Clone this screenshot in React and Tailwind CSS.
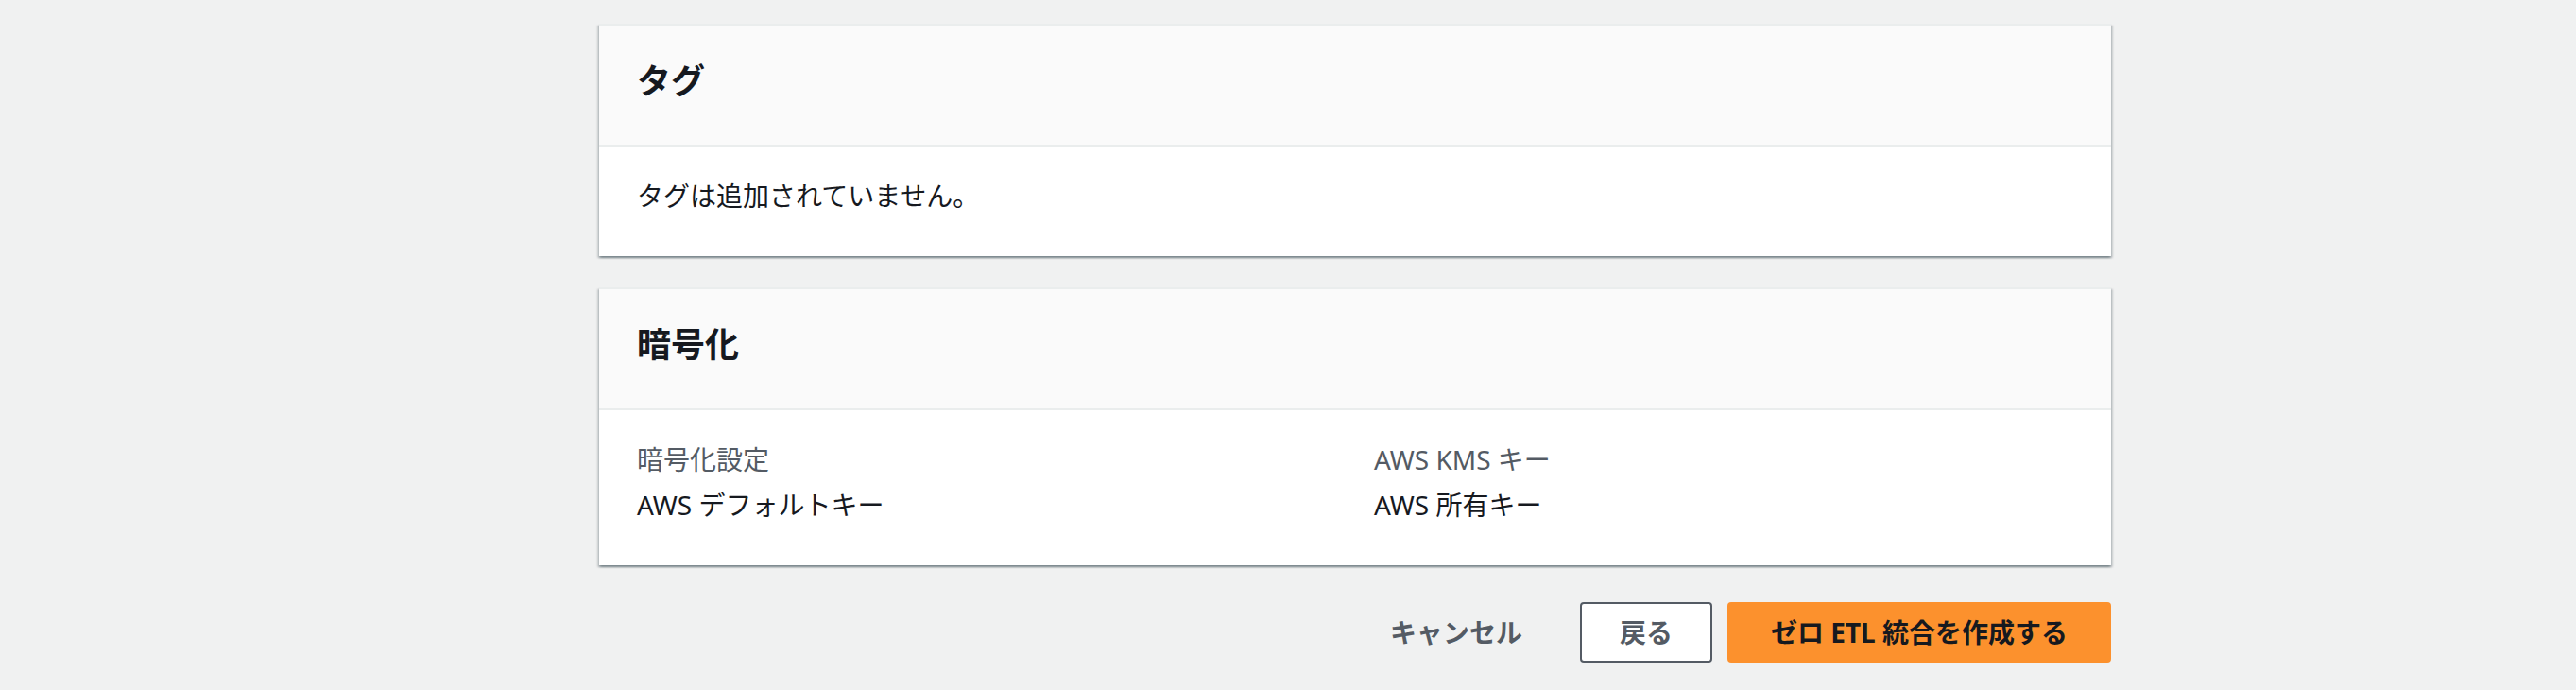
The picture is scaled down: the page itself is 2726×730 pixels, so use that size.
function Card({ title, children, className = '' }) {
  return (
    <section
      className={`bg-white border-t-2 border-[#eaeded] shadow-[0_2px_2px_0_rgba(0,28,36,0.3),2px_2px_2px_0_rgba(0,28,36,0.15),-2px_2px_2px_0_rgba(0,28,36,0.15)] ${className}`}
    >
      <header className="bg-[#fafafa] border-b-2 border-[#eaeded] px-[40px] pt-[37px] pb-[45px]">
        <h2 className="text-[36px] leading-[44px] font-bold text-[#16191f]">{title}</h2>
      </header>
      <div className="px-[40px] pt-[30px] pb-[42px]">{children}</div>
    </section>
  );
}

function Field({ label, value }) {
  return (
    <div className="flex flex-col gap-[4px]">
      <span className="text-[28px] leading-[44px] text-[#545b64]">{label}</span>
      <span className="text-[28px] leading-[44px] text-[#16191f]">{value}</span>
    </div>
  );
}

export default function App() {
  return (
    <div
      className="min-h-[730px] bg-[#f0f1f1] pl-[634px] pt-[25px]"
      style={{ fontFamily: '"Noto Sans", "Noto Sans CJK JP", sans-serif' }}
    >
      <div className="w-[1600px] flex flex-col">
        <Card title="タグ" className="mb-[33px]">
          <p className="text-[28px] leading-[44px] text-[#16191f]">タグは追加されていません。</p>
        </Card>

        <Card title="暗号化">
          <div className="grid grid-cols-2 gap-x-[40px]">
            <Field label="暗号化設定" value="AWS デフォルトキー" />
            <Field label="AWS KMS キー" value="AWS 所有キー" />
          </div>
        </Card>

        {/* Footer actions */}
        <div className="flex items-center justify-end gap-[16px] mt-[39px]">
          <button
            type="button"
            className="h-[64px] pl-[40px] pr-[45px] text-[28px] font-bold text-[#545b64]"
          >
            キャンセル
          </button>
          <button
            type="button"
            className="h-[64px] px-[40px] rounded-[4px] border-2 border-[#545b64] bg-white text-[28px] font-bold text-[#545b64]"
          >
            戻る
          </button>
          <button
            type="button"
            className="h-[64px] px-[46px] rounded-[4px] bg-[#fc912d] text-[28px] font-bold text-[#16191f]"
          >
            ゼロ ETL 統合を作成する
          </button>
        </div>
      </div>
    </div>
  );
}
